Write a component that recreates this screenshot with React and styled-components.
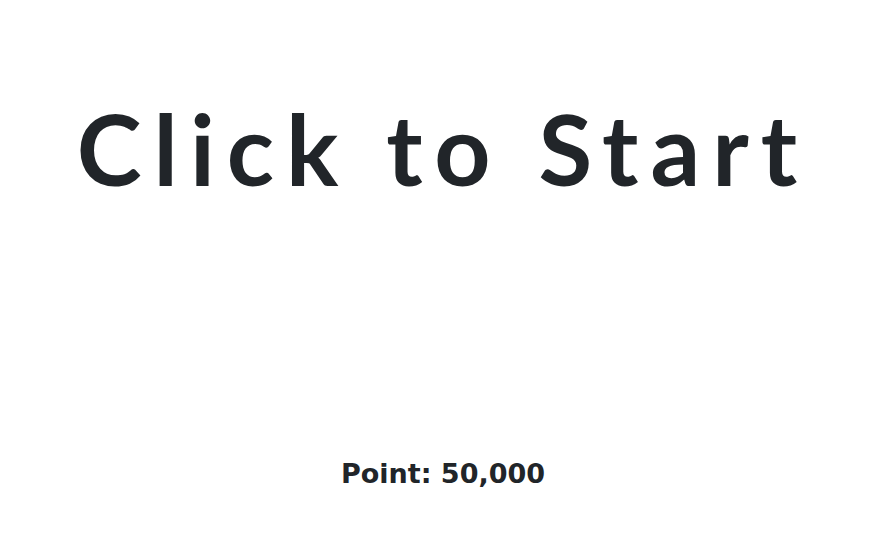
import React from 'react';
import styled, { createGlobalStyle } from 'styled-components';

const GlobalStyle = createGlobalStyle`
  html, body {
    margin: 0;
    padding: 0;
    background: #ffffff;
  }
  body {
    font-family: 'Lato', 'Liberation Sans', sans-serif;
    color: #212529;
  }
`;

function App() {
  return (
    <>
      <GlobalStyle />
      <Container>
        <StartButton>Click to Start</StartButton>
        <Point>Point: 50,000</Point>
      </Container>
    </>
  );
}

const Container = styled.div`
  width: 100vw;
  height: 546px;
  display: flex;
  flex-direction: column;
  align-items: center;
  justify-content: space-between;
  padding: 88px 0 56px;
  box-sizing: border-box;
`;

const StartButton = styled.div`
  font-family: 'Lato', 'Liberation Sans', sans-serif;
  font-size: 98px;
  font-weight: 700;
  letter-spacing: 12px;
  line-height: 120px;
  color: #212529;
  cursor: pointer;
  user-select: none;
`;

const Point = styled.div`
  font-family: 'DejaVu Sans', 'Liberation Sans', sans-serif;
  font-size: 27px;
  font-weight: 700;
  line-height: 32px;
  color: #212529;
`;

export default App;
